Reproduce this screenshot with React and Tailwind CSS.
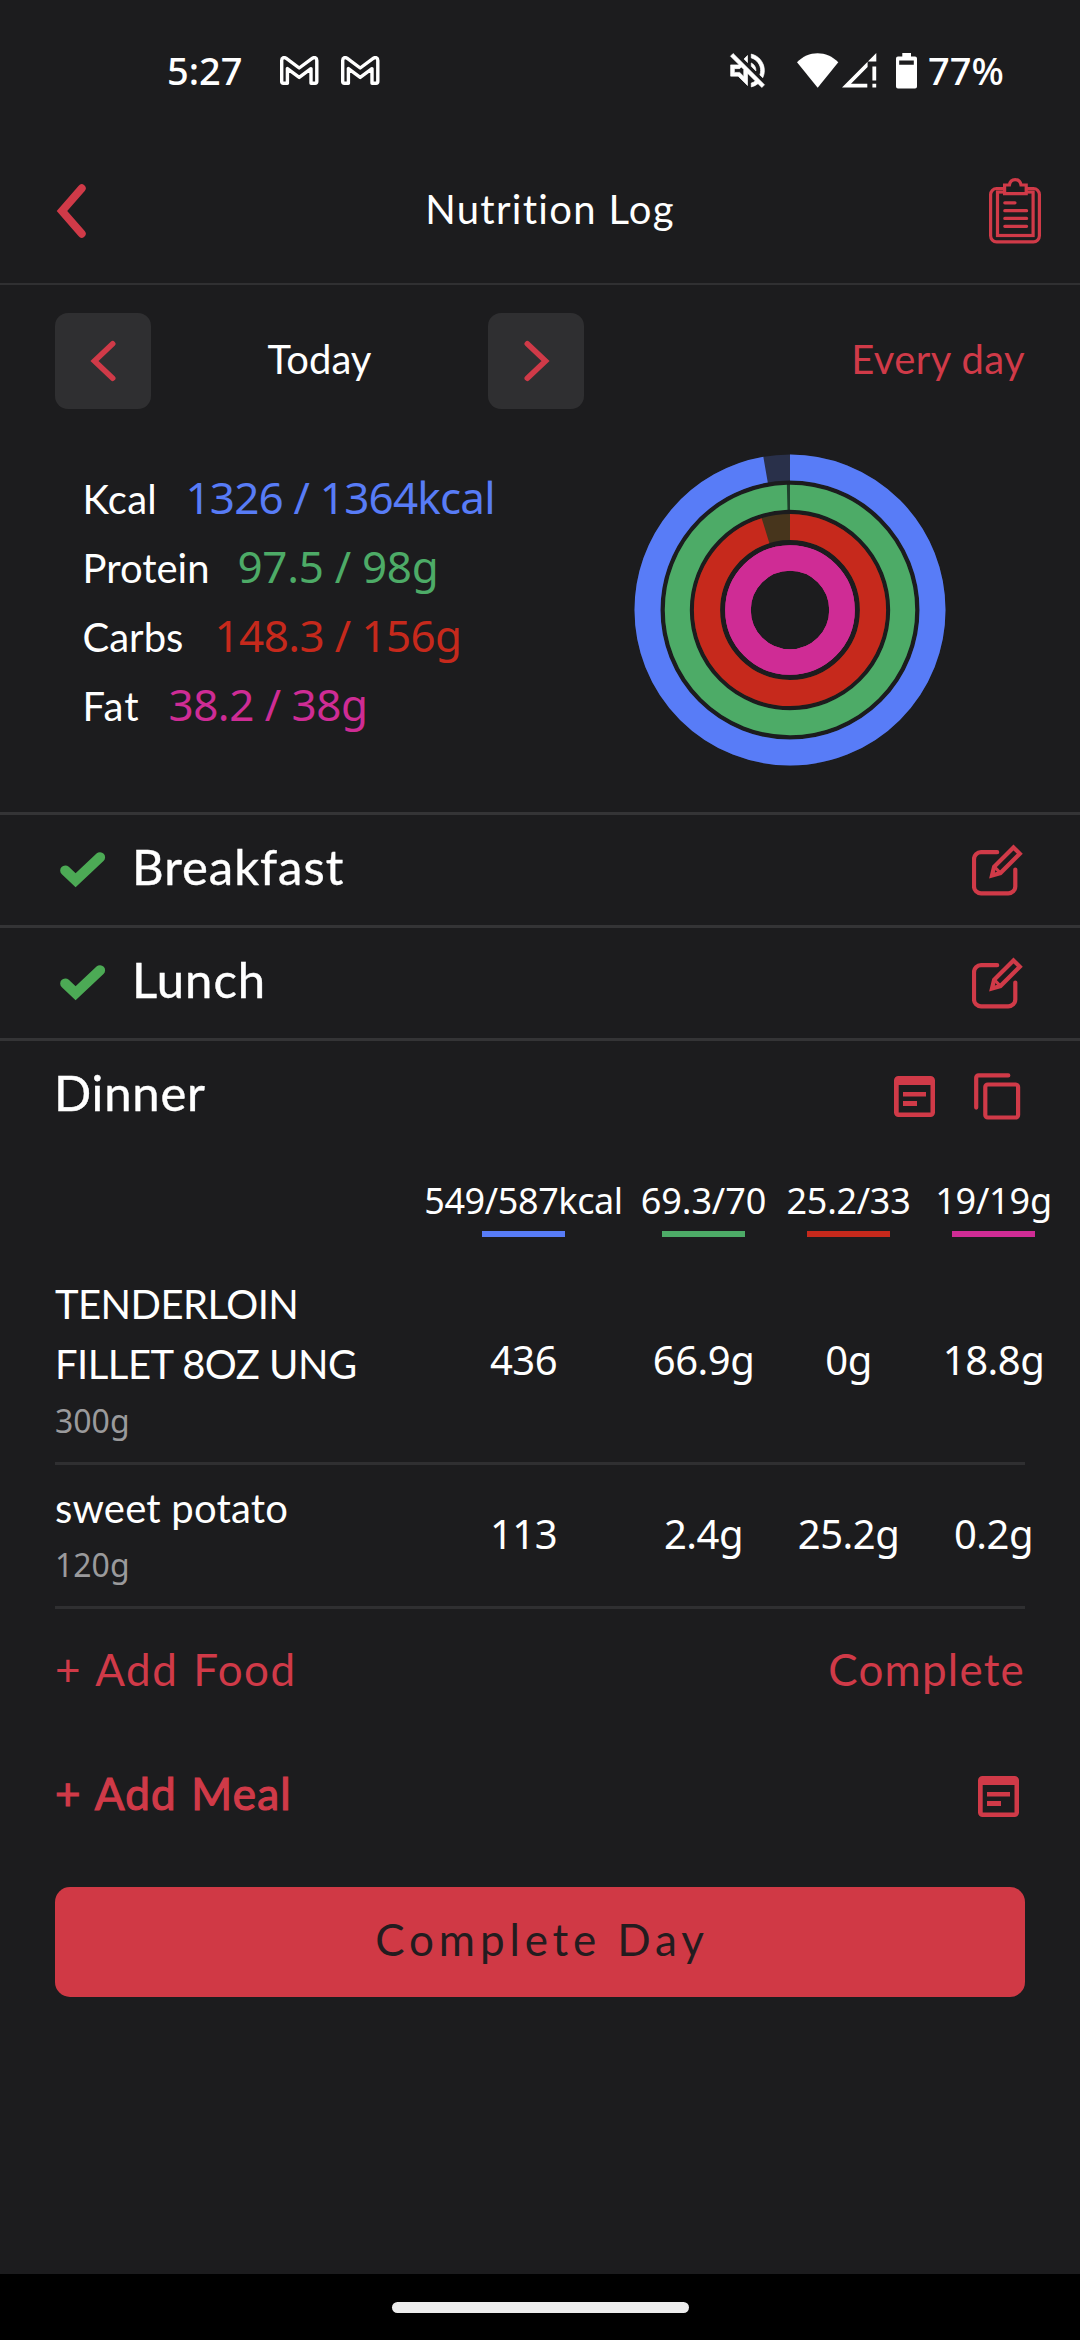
import React from "react";

const WORD = "font-['Lato','Noto_Sans',sans-serif]";
const NUM = "font-['Noto_Sans','Open_Sans',sans-serif]";

function MailIcon() {
  return (
    <svg className="h-[29px] w-[39px] shrink-0" viewBox="0 0 39 29" fill="none" stroke="#fff" strokeWidth="3.4" strokeLinejoin="round">
      <path d="M7.4 27.2H3.4a1.7 1.7 0 0 1-1.7-1.7V4.5C1.7 1.7 4 1 6 2.2L19.2 12 32.5 2.2C34.5 1 36.8 1.7 36.8 4.5V25.5a1.7 1.7 0 0 1-1.7 1.7H31V12.6L19.2 21.4 7.4 12.6Z" />
    </svg>
  );
}

function MutedIcon() {
  return (
    <svg className="ml-[345px] h-[45px] w-[45px] shrink-0" viewBox="0 0 24 24" fill="#fff" stroke="#fff" strokeWidth="0.35">
      <path d="M4.34 2.93 2.93 4.34 7.29 8.7 7 9H3v6h4l5 5v-6.59l4.18 4.18c-.65.49-1.38.88-2.18 1.11v2.06a8.94 8.94 0 0 0 3.61-1.75l2.05 2.05 1.41-1.41L4.34 2.93zM10 15.17 7.83 13H5v-2h2.83l.88-.88L10 11.41v3.76zM19 12c0 .82-.15 1.61-.41 2.34l1.53 1.53c.56-1.17.88-2.48.88-3.87 0-4.28-2.99-7.86-7-8.77v2.06c2.89.86 5 3.54 5 6.71zm-7-8-1.88 1.88L12 7.76zm4.5 8A4.5 4.5 0 0 0 14 7.97v1.79l2.48 2.48c.01-.08.02-.16.02-.24z" />
    </svg>
  );
}

function StatusBar() {
  return (
    <div className={`flex h-[141px] items-center whitespace-nowrap pl-[167px] text-[38px] font-medium leading-[48px] text-white ${NUM}`}>
      <span className="w-[113px] pb-[1px]">5:27</span>
      <div className="flex gap-[22px]">
        <MailIcon />
        <MailIcon />
      </div>
      <MutedIcon />
      <svg className="ml-[27px] h-[35px] w-[42px] shrink-0" viewBox="0 0 42 35" fill="#fff">
        <path d="M0 9.3C11-2.9 30-2.9 41.3 9.3L20.7 34.7Z" />
      </svg>
      <svg className="ml-[3px] h-[35px] w-[35px] shrink-0" viewBox="0 0 35 35" fill="#fff">
        <path d="M34.3 0V8.5H25.6V14L9 30.7H25.3V34.6H0Z" />
        <path d="M30.4 13.5H34.2V27.5H30.4ZM30.4 30.7H34.2V34.6H30.4Z" />
      </svg>
      <svg className="ml-[19px] h-[36px] w-[21px] shrink-0" viewBox="0 0 21 36" fill="#fff">
        <path fillRule="evenodd" d="M6.3 0H15V3.6H19A2 2 0 0 1 21 5.6V33.4A2 2 0 0 1 19 35.4H2A2 2 0 0 1 0 33.4V5.6A2 2 0 0 1 2 3.6H6.3ZM3.2 7.6V11.8H17.8V7.6Z" />
      </svg>
      <span className="ml-[11px] pb-[1px]">77%</span>
    </div>
  );
}

function Chevron({ right }) {
  return (
    <svg className="h-[42px] w-[29px]" viewBox="0 0 29 42" fill="none" stroke="#d03a48" strokeWidth="5.6" strokeLinecap="round">
      <path d={right ? "M5.3 3.8 23.5 21 5.3 38.2" : "M23.7 3.8 5.5 21 23.7 38.2"} />
    </svg>
  );
}

function ClipboardIcon() {
  return (
    <svg className="h-[66px] w-[52px]" viewBox="0 0 52 66" fill="none" stroke="#d03a48" strokeWidth="3.2" strokeLinecap="round">
      <rect x="1.6" y="10.5" width="48.8" height="53.3" rx="6" />
      <rect x="8.5" y="14" width="35.6" height="43.5" strokeLinejoin="miter" />
      <path fill="#1c1c1e" d="M15.6 15.6V7H20.4C21 3.2 23.5 1.6 26.2 1.6S31.4 3.2 32 7H37.2V15.6Z" />
      <path d="M15.8 24.8H26M15.8 32.7H37.6M15.8 40.4H37.6M15.8 48.3H37.6" />
    </svg>
  );
}

function EditIcon() {
  return (
    <svg className="h-[52px] w-[52px]" viewBox="0 0 52 52" fill="none" stroke="#d03a48" strokeWidth="4.2" strokeLinecap="round" strokeLinejoin="round">
      <path d="M25.2 8.2H9a7 7 0 0 0-7 7V42.4a7 7 0 0 0 7 7H36.3a7 7 0 0 0 7-7V25.6" />
      <path strokeLinejoin="miter" d="M41.5 3.4 47.8 9.7 28.4 29.1 20 31.5 22.1 22.8Z" />
      <path strokeWidth="3.2" d="M22.6 23 28 28.6" />
    </svg>
  );
}

function NoteIcon() {
  return (
    <svg className="h-[41px] w-[41px]" viewBox="0 0 41 41" fill="#d03a48">
      <path fillRule="evenodd" d="M4.5 0H36.5A4.5 4.5 0 0 1 41 4.5V36.5A4.5 4.5 0 0 1 36.5 41H4.5A4.5 4.5 0 0 1 0 36.5V4.5A4.5 4.5 0 0 1 4.5 0ZM4.7 9V36.6H36.5V9Z" />
      <path d="M9 16H32V20.6H9ZM9 25.1H23V29.9H9Z" />
    </svg>
  );
}

function CopyIcon() {
  return (
    <svg className="h-[47px] w-[47px]" viewBox="0 0 47 47" fill="none" stroke="#d03a48" strokeWidth="4.2" strokeLinecap="round" strokeLinejoin="round">
      <path d="M34.3 2.4H4.6a2.4 2.4 0 0 0-2.4 2.4V34.6" />
      <rect x="11.3" y="11.5" width="32.8" height="33" rx="2.4" />
    </svg>
  );
}

function CheckIcon() {
  return (
    <svg className="h-[36px] w-[46px]" viewBox="0 0 46 36" fill="none" stroke="#4caa55" strokeWidth="10.2" strokeLinecap="round" strokeLinejoin="miter">
      <path d="M5.3 18.6 15.6 28.2 40 5.3" />
    </svg>
  );
}

const rings = [
  { r: 142.5, w: 26, color: "#587cf7", track: "#29304a", value: 1326 / 1364 },
  { r: 112.7, w: 25, color: "#4dab67", track: "#1f3f2c", value: 97.5 / 98 },
  { r: 83, w: 26.2, color: "#c6291c", track: "#47351c", value: 148.3 / 156 },
  { r: 52, w: 25.6, color: "#cf2c95", track: "#cf2c95", value: 1 },
];

function MacroRings() {
  return (
    <svg className="h-[312px] w-[312px]" viewBox="-156 -156 312 312" fill="none">
      <g transform="rotate(-90)">
        {rings.map((g) => {
          const c = 2 * Math.PI * g.r;
          return (
            <g key={g.color} strokeWidth={g.w}>
              <circle r={g.r} stroke={g.track} />
              <circle r={g.r} stroke={g.color} strokeDasharray={g.value < 1 ? `${c * g.value} ${c}` : undefined} />
            </g>
          );
        })}
      </g>
    </svg>
  );
}

const macros = [
  { label: "Kcal", ls: "tracking-[0.3px]", gap: "w-[103px]", value: "1326 / 1364kcal", vs: "tracking-[-0.8px]", color: "text-[#587cf7]" },
  { label: "Protein", ls: "tracking-[0px]", gap: "w-[155px]", value: "97.5 / 98g", vs: "tracking-[-0.3px]", color: "text-[#4dab67]" },
  { label: "Carbs", ls: "tracking-[0px]", gap: "w-[132px]", value: "148.3 / 156g", vs: "tracking-[-0.6px]", color: "text-[#c6291c]" },
  { label: "Fat", ls: "tracking-[1.2px]", gap: "w-[86px]", value: "38.2 / 38g", vs: "tracking-[-0.5px]", color: "text-[#cf2c95]" },
];

const totals = [
  { text: "549/587kcal", bar: "bg-[#587cf7]", ls: "tracking-[-0.4px]" },
  { text: "69.3/70", bar: "bg-[#4dab67]", ls: "tracking-[-0.1px]" },
  { text: "25.2/33", bar: "bg-[#c6291c]", ls: "tracking-[-0.3px]" },
  { text: "19/19g", bar: "bg-[#cf2c95]", ls: "tracking-[-0.2px]" },
];

const foods = [
  { lines: [["TENDERLOIN", "tracking-[-0.55px]"], ["FILLET 8OZ UNG", "tracking-[-0.5px]"]], amount: "300g", values: ["436", "66.9g", "0g", "18.8g"], h: "h-[204px]" },
  { lines: [["sweet potato", "tracking-[0.2px]"]], amount: "120g", values: ["113", "2.4g", "25.2g", "0.2g"], h: "h-[144px]" },
];

const GRID = "grid w-[1011px] grid-cols-[361px_215px_145px_145px_145px]";

function MealRow({ name, tracking }) {
  return (
    <div className="flex h-[113px] items-center border-b-[3px] border-[#343436] pl-[60px] pr-[56px]">
      <CheckIcon />
      <span className={`ml-[26px] flex-1 pb-[8px] text-[49px] leading-[60px] [-webkit-text-stroke:0.4px_#fff] ${tracking}`}>{name}</span>
      <EditIcon />
    </div>
  );
}

export default function App() {
  return (
    <div className={`flex h-[2340px] w-[1080px] flex-col overflow-hidden bg-[#1c1c1e] text-white ${WORD}`}>
      <StatusBar />

      <header className="flex h-[144px] items-center justify-between border-b-2 border-[#303032] pb-[3px] pl-[56px] pr-[39px]">
        <svg className="h-[54px] w-[32px]" viewBox="0 0 32 54" fill="none" stroke="#d03a48" strokeWidth="8" strokeLinecap="round">
          <path d="M25.7 4.3 6 27 25.7 49.7" />
        </svg>
        <h1 className="ml-[23px] pb-[4px] text-[40px] leading-[50px] tracking-[1.3px]">Nutrition Log</h1>
        <ClipboardIcon />
      </header>

      <div className="mt-[28px] flex h-[96px] items-center px-[55px] text-[40px] leading-[50px]">
        <div className="flex h-[96px] w-[96px] items-center justify-center rounded-[13px] bg-[#2f2f31]">
          <Chevron />
        </div>
        <span className="w-[337px] pb-[5px] text-center">Today</span>
        <div className="flex h-[96px] w-[96px] items-center justify-center rounded-[13px] bg-[#2f2f31]">
          <Chevron right />
        </div>
        <span className="flex-1 pb-[5px] text-right tracking-[0.4px] text-[#d03a48]">Every day</span>
      </div>

      <section className="flex h-[403px] pl-[82.5px]">
        <div className="w-[551px] pt-[54px]">
          {macros.map((m) => (
            <div key={m.label} className="flex h-[69px] items-baseline whitespace-nowrap leading-[69px]">
              <span className={`text-[40px] ${m.gap} ${m.ls}`}>{m.label}</span>
              <span className={`text-[44px] ${NUM} ${m.color} ${m.vs}`}>{m.value}</span>
            </div>
          ))}
        </div>
        <div className="pt-[45px]">
          <MacroRings />
        </div>
      </section>

      <div className="border-t-[3px] border-[#343436]">
        <MealRow name="Breakfast" tracking="tracking-[1px]" />
        <MealRow name="Lunch" tracking="tracking-[1px]" />
      </div>

      <div className="flex h-[110px] items-center pl-[54px] pr-[59px]">
        <span className="flex-1 pb-[8px] text-[49px] leading-[60px] tracking-[0.8px] [-webkit-text-stroke:0.4px_#fff]">Dinner</span>
        <NoteIcon />
        <div className="ml-[39px]">
          <CopyIcon />
        </div>
      </div>

      <section className="mx-[55px] w-[970px]">
        <div className={`pt-[28px] ${GRID}`}>
          <span />
          {totals.map((t) => (
            <div key={t.text} className={`flex flex-col items-center whitespace-nowrap text-[36px] leading-[44px] ${NUM}`}>
              <span className={t.ls}>{t.text}</span>
              <div className={`mt-[8px] h-[6px] w-[83px] ${t.bar}`} />
            </div>
          ))}
        </div>
        <div className="mt-[24px]">
          {foods.map((f) => (
            <div key={f.amount} className={`border-b-[3px] border-[#2f2f31] ${f.h}`}>
              <div className={`h-full items-center ${GRID}`}>
                <div className="self-start pt-[12.5px] text-[40px] leading-[60px]">
                  {f.lines.map(([line, ls]) => (
                    <div key={line} className={`whitespace-nowrap ${ls}`}>{line}</div>
                  ))}
                  <div className={`mt-[3px] text-[32px] leading-[48px] text-[#9a9a9c] ${NUM}`}>{f.amount}</div>
                </div>
                {f.values.map((v) => (
                  <span key={v} className={`pb-[4px] text-center text-[40px] leading-[50px] tracking-[-0.5px] ${NUM}`}>{v}</span>
                ))}
              </div>
            </div>
          ))}
        </div>
      </section>

      <div className="flex h-[118px] items-center justify-between px-[55px] pt-[2px] text-[44px] leading-[56px] text-[#d03a48]">
        <span className="tracking-[1.5px] [word-spacing:2px]">+ Add Food</span>
        <span className="tracking-[1.2px]">Complete</span>
      </div>

      <div className="flex h-[139px] items-center justify-between pl-[55px] pr-[61px] text-[#d03a48]">
        <span className="pb-[7px] text-[44px] leading-[56px] tracking-[1.2px] [-webkit-text-stroke:1.2px_#d03a48] [word-spacing:2px]">+ Add Meal</span>
        <NoteIcon />
      </div>

      <button className="mx-[55px] mt-[21px] flex h-[110px] shrink-0 items-center justify-center rounded-[15px] bg-[#d03945] pb-[6px] pl-[4px] text-[44px] leading-[56px] tracking-[4.85px] text-[#231c1f]">
        Complete Day
      </button>

      <div className="mt-auto flex h-[66px] items-center justify-center bg-black">
        <div className="h-[11px] w-[297px] rounded-full bg-[#ededed]" />
      </div>
    </div>
  );
}
